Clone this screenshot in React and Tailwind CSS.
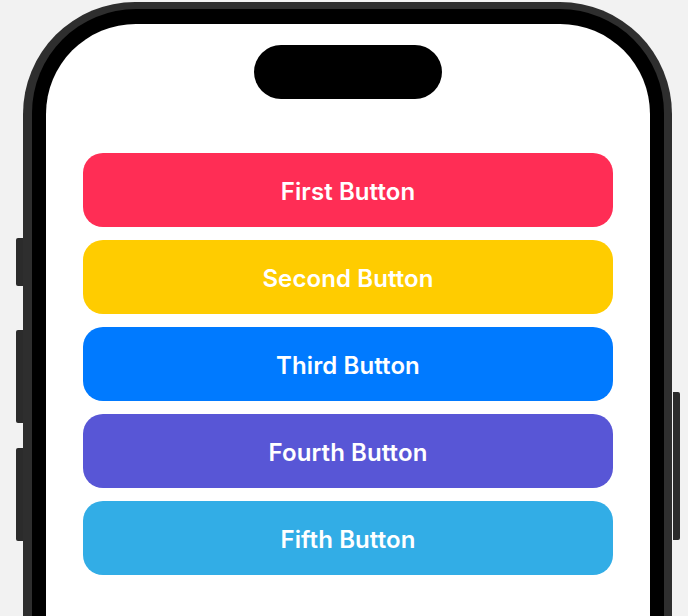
const buttons = [
  { label: 'First Button', color: 'bg-[#ff2d55]' },
  { label: 'Second Button', color: 'bg-[#ffcc00]' },
  { label: 'Third Button', color: 'bg-[#007aff]' },
  { label: 'Fourth Button', color: 'bg-[#5856d6]' },
  { label: 'Fifth Button', color: 'bg-[#32ade6]' },
];

export default function App() {
  return (
    <div className="flex h-[616px] w-[688px] items-start overflow-hidden bg-[#f2f2f2] pl-[16px] font-['Inter',sans-serif]">
      {/* left keys: action + volume */}
      <div className="flex w-[7px] shrink-0 flex-col pt-[238px]">
        <div className="h-[48px] rounded-l-[2px] bg-[#2b2b2b]" />
        <div className="mt-[44px] h-[93px] rounded-l-[2px] bg-[#2b2b2b]" />
        <div className="mt-[25px] h-[93px] rounded-l-[2px] bg-[#2b2b2b]" />
      </div>

      {/* device body */}
      <div className="mt-[2px] h-[760px] w-[649px] shrink-0 rounded-[112px] bg-[#2e2e2e] pl-[9px] pr-[8px] pt-[7px]">
        <div className="h-full rounded-[104px] bg-black pl-[14px] pr-[14px] pt-[15px]">
          <div className="flex h-full flex-col items-center rounded-[90px] bg-white">
            <div className="mt-[21px] h-[54px] w-[188px] rounded-full bg-black" />
            <div className="mt-[54px] flex w-[530px] flex-col gap-[13px]">
              {buttons.map((b) => (
                <button
                  key={b.label}
                  className={`flex h-[74px] items-center justify-center rounded-[20px] pt-[3px] ${b.color} text-[24px] font-semibold tracking-[0.1px] text-white`}
                >
                  {b.label}
                </button>
              ))}
            </div>
          </div>
        </div>
      </div>

      {/* side button */}
      <div className="ml-[1px] w-[7px] shrink-0 pt-[392px]">
        <div className="h-[148px] rounded-r-[2px] bg-[#2b2b2b]" />
      </div>
    </div>
  );
}
